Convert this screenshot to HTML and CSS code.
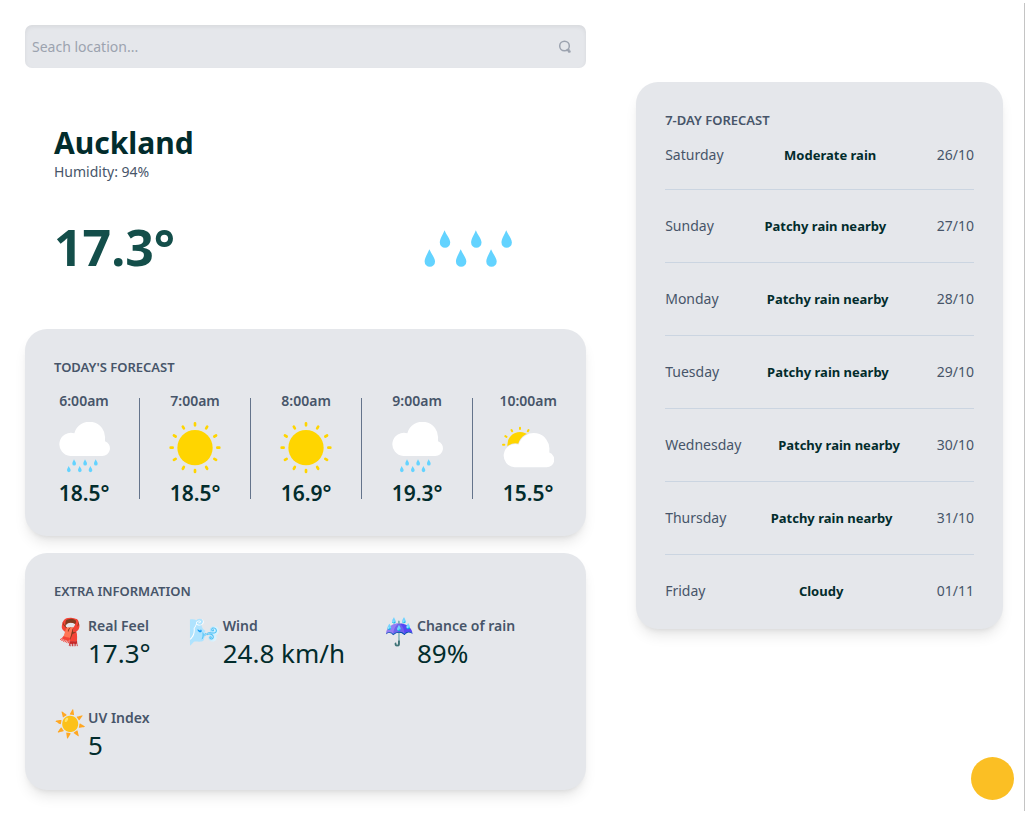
FILE: index.html
```html
<!DOCTYPE html>
<html lang="en">
<head>
<meta charset="utf-8">
<meta name="viewport" content="width=device-width, initial-scale=1">
<title>Weather</title>
<link rel="stylesheet" href="styles.css">
</head>
<body>
<svg class="sprite" aria-hidden="true">
  <symbol id="rain" viewBox="0 0 156 156">
    <path d="M37 102A35 35 0 1 1 49 33.500A47 47 0 0 1 141 51V57.500A23 23 0 0 1 133 102Z" fill="#fff"/>
    <g fill="#63d3ff">
      <path id="drop" d="M48 112c2 5 6 9 6 13a5.500 5.500 0 0 1-11 0c0-4 3-8 5-13Z"/>
      <use href="#drop" x="33"/><use href="#drop" x="65"/>
      <use href="#drop" x="-16" y="20"/><use href="#drop" x="17" y="20"/><use href="#drop" x="49" y="20"/>
    </g>
  </symbol>
  <symbol id="sun" viewBox="0 0 156 156">
    <circle cx="78" cy="77" r="53" fill="#ffd500"/>
    <g stroke="#ffd500" stroke-width="8" stroke-linecap="round">
      <path id="rays" d="M78 4v6M78 144v6M151 77h-6M5 77h6"/>
      <use href="#rays" transform="rotate(30 78 77)"/><use href="#rays" transform="rotate(60 78 77)"/>
    </g>
  </symbol>
  <symbol id="partly" viewBox="0 0 156 156">
    <circle cx="54" cy="68" r="38" fill="#ffd500"/>
    <path d="M54 17v4M79.500 24l-2 3.500M28.500 24l2 3.500M10 42.500l3.500 2M3 68h4" stroke="#ffd500" stroke-width="6" stroke-linecap="round"/>
    <path transform="translate(1 34)" d="M37 102A35 35 0 1 1 49 33.500A47 47 0 0 1 141 51V57.500A23 23 0 0 1 133 102Z" fill="#fff" stroke="#e5e7eb" stroke-width="4" paint-order="stroke"/>
  </symbol>
</svg>
<main class="page">
  <div class="main-column">
    <form class="search">
      <input class="search-input" type="search" placeholder="Seach location..." aria-label="Search location">
      <button class="search-button" type="submit" aria-label="Search">
        <svg viewBox="0 0 14 14" width="14" height="14" fill="none" stroke="#9ca3af" stroke-linecap="round"><circle cx="6.500" cy="6" r="4.800" stroke-width="1.500"/><path d="M9.500 10h1M11 11.500h.5" stroke-width="2.500"/></svg>
      </button>
    </form>
    <section class="current">
      <div class="current-text">
        <div>
          <h1 class="city">Auckland</h1>
          <p class="humidity">Humidity: 94%</p>
        </div>
        <p class="temperature">17.3°</p>
      </div>
      <svg class="current-icon" role="img" aria-label="Rain"><use href="#rain"/></svg>
    </section>
    <section class="card">
      <h2 class="card-title">TODAY'S FORECAST</h2>
      <ul class="hours">
        <li class="hour"><span class="label">6:00am</span><svg class="hour-icon"><use href="#rain"/></svg><strong class="hour-temp">18.5°</strong></li>
        <li class="hour"><span class="label">7:00am</span><svg class="hour-icon"><use href="#sun"/></svg><strong class="hour-temp">18.5°</strong></li>
        <li class="hour"><span class="label">8:00am</span><svg class="hour-icon"><use href="#sun"/></svg><strong class="hour-temp">16.9°</strong></li>
        <li class="hour"><span class="label">9:00am</span><svg class="hour-icon"><use href="#rain"/></svg><strong class="hour-temp">19.3°</strong></li>
        <li class="hour"><span class="label">10:00am</span><svg class="hour-icon"><use href="#partly"/></svg><strong class="hour-temp">15.5°</strong></li>
      </ul>
    </section>
    <section class="card">
      <h2 class="card-title">EXTRA INFORMATION</h2>
      <div class="extras">
        <div class="extra"><span class="emoji">🧣</span><div><p class="label">Real Feel</p><p class="value">17.3°</p></div></div>
        <div class="extra"><span class="emoji">🌬️</span><div><p class="label">Wind</p><p class="value">24.8 km/h</p></div></div>
        <div class="extra"><span class="emoji">☔</span><div><p class="label">Chance of rain</p><p class="value">89%</p></div></div>
        <div class="extra"><span class="emoji">☀️</span><div><p class="label">UV Index</p><p class="value">5</p></div></div>
      </div>
    </section>
  </div>
  <aside class="card week">
    <h2 class="card-title">7-DAY FORECAST</h2>
    <ul class="days">
      <li class="day"><span>Saturday</span><strong class="condition">Moderate rain</strong><span>26/10</span></li>
      <li class="day"><span>Sunday</span><strong class="condition">Patchy rain nearby</strong><span>27/10</span></li>
      <li class="day"><span>Monday</span><strong class="condition">Patchy rain nearby</strong><span>28/10</span></li>
      <li class="day"><span>Tuesday</span><strong class="condition">Patchy rain nearby</strong><span>29/10</span></li>
      <li class="day"><span>Wednesday</span><strong class="condition">Patchy rain nearby</strong><span>30/10</span></li>
      <li class="day"><span>Thursday</span><strong class="condition">Patchy rain nearby</strong><span>31/10</span></li>
      <li class="day"><span>Friday</span><strong class="condition">Cloudy</strong><span>01/11</span></li>
    </ul>
  </aside>
</main>
<button class="theme-toggle" type="button" aria-label="Toggle theme"></button>
</body>
</html>
```
FILE: styles.css
```css
* { box-sizing: border-box; margin: 0; padding: 0; }
body {
  background: #fff;
  color: #475569;
  font-family: "Noto Sans", "Open Sans", sans-serif;
  font-size: 14px;
  line-height: 20px;
}
ul { list-style: none; }
.sprite { position: absolute; width: 0; height: 0; }
.page {
  display: grid;
  grid-template-columns: 153fr 100fr;
  gap: 50px;
  align-items: start;
  margin-top: 3px;
  padding: 22px 21px 21px 25px;
  border-right: 1px solid #c4c4c4;
}
.search {
  display: flex;
  align-items: center;
  padding: 0 14px 0 7px;
  border-radius: 7px;
  background: #e5e7eb;
  box-shadow: inset 0 2px 4px rgba(0, 0, 0, .06);
}
.search-input {
  flex: 1;
  min-width: 0;
  height: 43px;
  border: 0;
  outline: 0;
  background: transparent;
  color: #475569;
  font: inherit;
}
.search-input::placeholder { color: #9ca3af; opacity: 1; }
.search-button { display: flex; border: 0; background: none; }
.current {
  display: flex;
  justify-content: space-between;
  padding: 56px 39px 57px 29px;
}
.current-text { display: flex; flex-direction: column; justify-content: space-between; }
.city { color: #022c2c; font-size: 30px; line-height: 38px; font-weight: 700; }
.temperature { color: #134e4a; font-size: 50px; line-height: 50px; font-weight: 700; }
.current-icon { width: 148px; height: 148px; }
.card {
  padding: 28px 29px;
  border-radius: 22px;
  background: #e5e7eb;
  box-shadow: 0 9px 14px -3px rgba(0, 0, 0, .1), 0 4px 6px -4px rgba(0, 0, 0, .1);
}
.card + .card { margin-top: 17px; }
.card-title { font-size: 13px; line-height: 20px; font-weight: 600; }
.label { font-weight: 600; }
.hours { display: grid; grid-template-columns: repeat(5, 1fr); margin: 21px -26px 9px; }
.hour {
  display: flex;
  flex-direction: column;
  align-items: center;
  height: 101px;
  border-left: 1px solid #64748b;
}
.hour:first-child { border-color: transparent; }
.hour .label { line-height: 6px; }
.hour-icon { width: 52px; height: 52px; margin: 18px 0 13px; }
.hour-temp { color: #022c2c; font-size: 21px; line-height: 12px; font-weight: 600; }
.extras { display: flex; flex-wrap: wrap; gap: 38px; margin-top: 15px; }
.extra { display: flex; }
.emoji { width: 34px; font-family: "Noto Color Emoji", sans-serif; font-size: 26px; line-height: 32px; }
.value { color: #022c2c; font-size: 26px; line-height: 34px; }
.week { margin-top: 57px; }
.day {
  display: flex;
  justify-content: space-between;
  padding: 26px 0;
  border-bottom: 1px solid #cbd5e1;
}
.day:first-child { padding: 15px 0 24px; }
.day:last-child { padding-bottom: 0; border: 0; }
.condition { color: #022c2c; font-size: 13px; font-weight: 700; }
.theme-toggle {
  position: fixed;
  right: 11px;
  bottom: 14px;
  width: 43px;
  height: 43px;
  border: 0;
  border-radius: 50%;
  background: #fbbf24;
}
```
